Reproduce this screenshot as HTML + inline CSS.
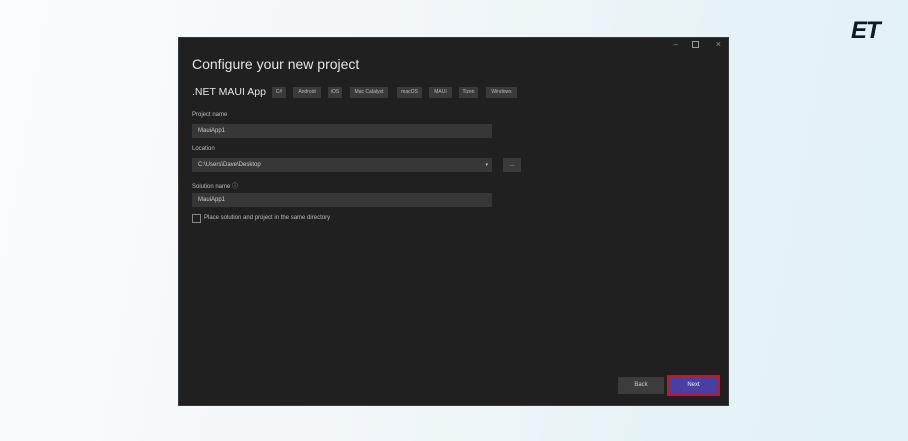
<!DOCTYPE html>
<html><head><style>
body{margin:0;width:908px;height:441px;overflow:hidden;background:linear-gradient(100deg,#fbfcfd 0%,#f3f7fa 40%,#e6f3f6 75%,#e2f2f5 100%);font-family:"Liberation Sans",sans-serif;position:relative}
.win{position:absolute;left:178px;top:37px;width:551px;height:369px;background:#202020;border:1px solid #3a3a3a;box-sizing:border-box}
.a{position:absolute;color:#d0d0d0}
.tag{position:absolute;top:49px;height:11px;background:#3a3a3a;color:#bbb;font-size:5px;line-height:11px;text-align:center}
.lbl{position:absolute;left:13px;font-size:6px;color:#bbb}
.inp{position:absolute;left:13px;width:300px;height:14px;background:#373737;font-size:6px;color:#ccc;line-height:14px;padding-left:6px;box-sizing:border-box}
</style></head><body>
<div style="position:absolute;left:851px;top:17px;font-size:24px;font-weight:bold;font-style:italic;color:#101a22;letter-spacing:-1px">ET</div>
<div class="win">
<div class="a" style="right:50px;top:2px;font-size:8px;color:#999">–</div>
<div class="a" style="right:29px;top:3px;width:5px;height:5px;border:1px solid #999"></div>
<div class="a" style="right:7px;top:1px;font-size:9px;color:#999">×</div>
<div class="a" style="left:13px;top:18px;font-size:14px;color:#e4e4e4">Configure your new project</div>
<div class="a" style="left:13px;top:48px;font-size:10.5px;color:#e4e4e4">.NET MAUI App</div>
<div class="tag" style="left:93px;width:14px">C#</div>
<div class="tag" style="left:114px;width:28px">Android</div>
<div class="tag" style="left:149px;width:14px">iOS</div>
<div class="tag" style="left:171px;width:38px">Mac Catalyst</div>
<div class="tag" style="left:218px;width:25px">macOS</div>
<div class="tag" style="left:250px;width:23px">MAUI</div>
<div class="tag" style="left:280px;width:19px">Tizen</div>
<div class="tag" style="left:307px;width:31px">Windows</div>
<div class="lbl" style="top:74px">Project name</div>
<div class="inp" style="top:86px">MauiApp1</div>
<div class="lbl" style="top:108px">Location</div>
<div class="inp" style="top:120px">C:\Users\Dave\Desktop<span style="position:absolute;right:4px;font-size:5px">▾</span></div>
<div class="a" style="left:324px;top:120px;width:18px;height:14px;background:#3a3a3a;color:#bbb;font-size:6px;text-align:center;line-height:14px">...</div>
<div class="lbl" style="top:143px">Solution name ⓘ</div>
<div class="inp" style="top:155px">MauiApp1</div>
<div class="a" style="left:13px;top:176px;width:7px;height:7px;border:1px solid #888"></div>
<div class="lbl" style="left:25px;top:177px">Place solution and project in the same directory</div>
<div class="a" style="left:439px;top:339px;width:46px;height:17px;background:#3c3c3c;color:#ccc;font-size:6px;text-align:center;line-height:17px">Back</div>
<div class="a" style="left:488px;top:337px;width:53px;height:21px;background:#4a3fa0;border:2px solid #c0182a;box-sizing:border-box;color:#eee;font-size:6px;text-align:center;line-height:17px">Next</div>
</div>
</body></html>
